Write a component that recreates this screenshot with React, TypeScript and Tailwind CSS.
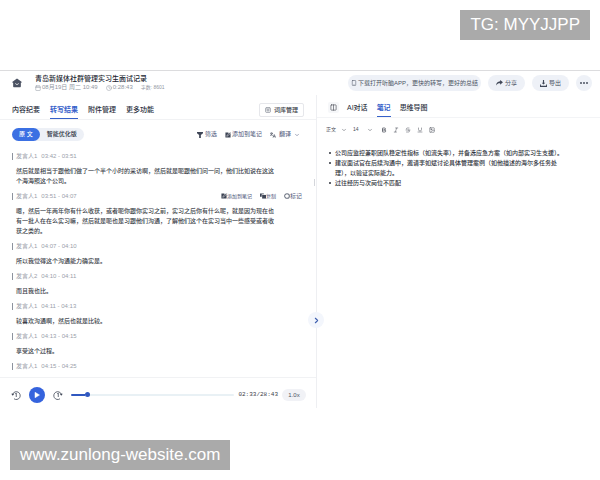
import { useState } from "react";
import type { ReactNode } from "react";
import {
  Bold,
  Calendar,
  ChevronDown,
  ChevronRight,
  Clock,
  Columns2,
  Image,
  Italic,
  Smartphone,
  Strikethrough,
  Underline,
} from "lucide-react";

const segments = [
  { speaker: "发言人1", time: "03:42 - 03:51", text: "然后就是相当于跟他们做了一个半个小时的采访啊，然后就是呃跟他们问一问，他们比如说在这这个海海照这个公司。" },
  {
    speaker: "发言人1",
    time: "03:51 - 04:07",
    text: "嗯，然后一年两年你有什么收获，或者呃你跟你实习之前，实习之后你有什么呢，就是因为现在也有一批人在在么实习嘛，然后就是呃也是习跟他们沟通，了解他们这个在实习当中一些感受或者收获之类的。",
    active: true,
  },
  { speaker: "发言人1", time: "04:07 - 04:10", text: "所以我觉得这个沟通能力确实是。" },
  { speaker: "发言人2", time: "04:10 - 04:11", text: "而且我也比。" },
  { speaker: "发言人1", time: "04:11 - 04:13", text: "较喜欢沟通啊，然后也就是比较。" },
  { speaker: "发言人1", time: "04:13 - 04:15", text: "享受这个过程。" },
  { speaker: "发言人1", time: "04:15 - 04:25", text: "" },
];

const notes = [
  "公司应监控兼职团队稳定性指标（如流失率），并备选应急方案（如内部实习生支援）。",
  "建议面试官在后续沟通中，邀请李如斌讨论具体管理案例（如他描述的海尔多任务处理），以验证实际能力。",
  "过往经历与次岗位不匹配",
];

function HomeIcon() {
  return (
    <svg viewBox="0 0 20 20" className="size-[10px] shrink-0" fill="#4b5262">
      <path d="M10 1.2 19 7.6c.8.6.4 1.7-.5 1.7h-.8v7.2c0 1.2-.8 2-2 2H4.300c-1.200 0-2-.8-2-2V9.300h-.8c-.9 0-1.300-1.100-.5-1.700z" />
      <path d="M7 11.500c1.500 2.200 4.500 2.200 6 0" stroke="#fff" strokeWidth="1.600" fill="none" strokeLinecap="round" />
    </svg>
  );
}

function ShareIcon() {
  return (
    <svg viewBox="0 0 16 14" className="h-[6px] w-[7px]" fill="#3f4656">
      <path d="M9.500 0 16 5.500 9.500 11V7.800C5.500 7.600 2.500 9 0 13 .5 7.500 3.500 3.800 9.500 3.200z" />
    </svg>
  );
}

function ExportIcon() {
  return (
    <svg viewBox="0 0 16 16" className="size-[7px]" fill="#3f4656">
      <path d="M6.700 0h2.600v6H12L8 10.500 4 6h2.700zM0 10.500h2v2.500h12v-2.500h2V16H0z" />
    </svg>
  );
}

function FilterIcon() {
  return (
    <svg viewBox="0 0 12 12" className="size-[6px]" fill="#3f4656">
      <path d="M0 0h12v2.500L7.700 6v6H4.300V6L0 2.500z" />
    </svg>
  );
}

function NoteIcon() {
  return (
    <svg viewBox="0 0 14 14" className="size-[6px]">
      <path d="M1 1h7v2h5v10H1z" fill="#3f4656" />
      <path d="M4 10 5 7l7-6.500L13.500 2 7 9z" fill="#3f4656" stroke="#fff" strokeWidth="1" />
    </svg>
  );
}

function TranslateIcon() {
  return (
    <svg viewBox="0 0 14 14" className="size-[6px]" fill="none" stroke="#3f4656" strokeWidth="1.500">
      <path d="M0 3h7M3.500 1v2M6 3C5 6 3 7.500 .5 8.500M1.500 4.500C3 7 5 8 6.500 8.500M7 13l3-7 3 7M8 11h4" />
    </svg>
  );
}

function CopyIcon() {
  return (
    <svg viewBox="0 0 14 14" className="size-[6px]" fill="#3f4656">
      <path d="M0 1h9v2H4v6H0z" />
      <path d="M5 4.500h9V13H5z" />
    </svg>
  );
}

function MarkIcon() {
  return (
    <svg viewBox="0 0 14 14" className="size-[6px]" fill="none" stroke="#6b7280">
      <circle cx="7" cy="7" r="5.500" strokeWidth="2.400" />
    </svg>
  );
}

function LexiconIcon() {
  return (
    <svg viewBox="0 0 14 14" className="size-[6px]" fill="none" stroke="#5b6270" strokeWidth="1.300">
      <rect x="1.500" y="1.500" width="11" height="11" rx="2" />
      <circle cx="7" cy="7" r="2.500" />
      <path d="M4 1.500v2M10 1.500v2" />
    </svg>
  );
}

function SkipIcon({ forward = false }: { forward?: boolean }) {
  return (
    <svg viewBox="0 0 20 20" className="size-[10px]" fill="none" stroke="#3f4656" strokeWidth="1.600">
      <path d={forward ? "M14 17.500A7.800 7.800 0 1 1 16.500 8" : "M6 17.500A7.800 7.800 0 1 0 3.500 8"} />
      <path d={forward ? "M13.500 7.500h6l-3 4z" : "M.5 7.500h6l-3 4z"} fill="#3f4656" stroke="none" />
      <path d="M8.500 7.500 10.500 6v8" />
    </svg>
  );
}

function Tab({ active = false, children }: { active?: boolean; children: ReactNode }) {
  return (
    <button
      role="tab"
      aria-selected={active}
      className={
        active
          ? "border-b border-[#3560c9] pb-[3px] text-[7px] leading-[10px] font-bold text-[#3560c9]"
          : "border-b border-transparent pb-[3px] text-[7px] leading-[10px] font-medium text-[#2b3040]"
      }
    >
      {children}
    </button>
  );
}

function TopBar() {
  return (
    <header className="flex h-[25px] items-center border-t border-[#dcdcde] pr-2 pl-3">
      <a href="#" aria-label="首页">
        <HomeIcon />
      </a>
      <div className="ml-[13px] flex flex-col">
        <h1 className="text-[7px] leading-[9px] font-medium text-[#22262f]">青岛新媒体社群管理实习生面试记录</h1>
        <div className="flex items-center text-[6px] leading-[9px] text-[#9298a3]">
          <Calendar size={6} className="mr-px" />
          <span>08月19日 周二 10:49</span>
          <Clock size={6} className="mr-px ml-2" />
          <span>0:28:43</span>
          <span className="ml-2 text-[5px]">字数: 8601</span>
        </div>
      </div>
      <div className="ml-auto flex items-center gap-[7px] text-[6px] text-[#4b5262]">
        <button className="flex h-4 items-center gap-px rounded-full bg-[#eef1f7] px-[3px]">
          <Smartphone size={6} />
          下载打开听脑APP，更快的转写，更好的总结
        </button>
        <button className="flex h-4 items-center gap-[2px] rounded-full bg-[#eef1f7] px-2">
          <ShareIcon />
          分享
        </button>
        <button className="flex h-4 items-center gap-[2px] rounded-full bg-[#eef1f7] px-2">
          <ExportIcon />
          导出
        </button>
        <button aria-label="更多" className="flex size-4 items-center justify-center gap-px rounded-full bg-[#eef1f7]">
          <i className="size-[2px] rounded-full bg-[#4b5262]" />
          <i className="size-[2px] rounded-full bg-[#4b5262]" />
          <i className="size-[2px] rounded-full bg-[#4b5262]" />
        </button>
      </div>
    </header>
  );
}

function Transcript() {
  return (
    <div className="flex flex-col gap-[5px] pt-[10px] pr-[14px] pb-[6px] pl-3 leading-[10px]">
      {segments.map((s) => (
        <article key={s.time} className="flex flex-col gap-[5px]">
          <div className="flex items-center text-[6px] text-[#9aa0aa]">
            <i className="mr-[3px] h-[7px] w-px bg-[#8d939e]" />
            <span className="mr-1">{s.speaker}</span>
            <span>{s.time}</span>
            {s.active && (
              <div className="ml-auto flex items-center gap-2 text-[5px] text-[#4b5578]">
                <button className="flex items-center">
                  <NoteIcon />
                  添加到笔记
                </button>
                <button className="flex items-center">
                  <CopyIcon />
                  复制
                </button>
                <button className="flex items-center text-[6px]">
                  <MarkIcon />
                  标记
                </button>
              </div>
            )}
          </div>
          {s.text && <p className="ml-1 max-w-[260px] text-[6px] font-medium text-[#3a3e48]">{s.text}</p>}
        </article>
      ))}
    </div>
  );
}

function Player() {
  const [position, setPosition] = useState(153);
  const length = 1723;
  const played = (position / length) * 100;

  return (
    <div className="flex h-[31px] items-center border-t border-[#f1f2f4] pt-[3px] pr-[10px] pl-[11px]">
      <button aria-label="后退">
        <SkipIcon />
      </button>
      <button aria-label="播放" className="mx-2 flex size-4 items-center justify-center rounded-full bg-[#3563dd]">
        <svg viewBox="0 0 12 12" className="size-[6px]" fill="#fff">
          <path d="M2 .5 11 6l-9 5.500z" stroke="#fff" strokeLinejoin="round" />
        </svg>
      </button>
      <button aria-label="前进">
        <SkipIcon forward />
      </button>
      <input
        type="range"
        aria-label="播放进度"
        min={0}
        max={length}
        value={position}
        onChange={(e) => setPosition(Number(e.target.value))}
        style={{ backgroundImage: `linear-gradient(to right, #3058c0 ${played}%, #e9f1f5 ${played}%)` }}
        className="mx-1 ml-2 h-[2px] min-w-0 flex-1 appearance-none rounded-full [&::-webkit-slider-thumb]:size-[5px] [&::-webkit-slider-thumb]:appearance-none [&::-webkit-slider-thumb]:rounded-full [&::-webkit-slider-thumb]:bg-[#3058c0]"
      />
      <span className="font-['Liberation_Mono',monospace] text-[6px] text-[#3a3e48]">02:33/28:43</span>
      <button className="ml-1 h-3 w-6 rounded-full bg-[#f1f2f6] text-[6px] leading-3 text-[#4b5262]">1.0x</button>
    </div>
  );
}

function TranscriptPanel() {
  return (
    <section className="relative border-r border-[#eeeff2]">
      <div className="flex h-[25px] items-end border-b border-[#f1f2f4] pr-3 pl-3">
        <div role="tablist" className="flex gap-[10px]">
          <Tab>内容纪要</Tab>
          <Tab active>转写结果</Tab>
          <Tab>附件管理</Tab>
          <Tab>更多功能</Tab>
        </div>
        <button className="mb-[2px] ml-auto flex h-[14px] items-center gap-[3px] rounded-[2px] border border-[#e6e7eb] px-[5px] text-[6px] font-medium text-[#3a3e48]">
          <LexiconIcon />
          词库管理
        </button>
      </div>

      <div className="flex items-center pt-2 pr-4 pl-3 text-[6px] text-[#4b5578]">
        <div className="flex h-[13px] items-center rounded-full bg-[#edf0f6]">
          <button className="h-[13px] rounded-full bg-[#3b70e3] px-[7px] font-medium text-white">原 文</button>
          <button className="px-[7px] font-medium text-[#2b3040]">智能优化版</button>
        </div>
        <div className="ml-auto flex items-center gap-2">
          <button className="flex items-center gap-[2px]">
            <FilterIcon />
            筛选
          </button>
          <button className="flex items-center gap-px">
            <NoteIcon />
            添加到笔记
          </button>
          <button className="flex items-center gap-[3px]">
            <TranslateIcon />
            翻译
            <ChevronDown size={6} />
          </button>
        </div>
      </div>

      <Transcript />
      <Player />

      <i className="absolute top-[84px] right-px h-[7px] w-px bg-[#d4d6db]" />
      <button
        aria-label="收起"
        className="absolute top-[217px] -right-2 z-10 flex size-4 items-center justify-center rounded-full bg-[#f3f6fc] text-[#3f5fae]"
      >
        <ChevronRight size={9} strokeWidth={3} />
      </button>
    </section>
  );
}

function NotesPanel() {
  return (
    <section>
      <div className="flex h-[23px] items-end border-b border-[#f3f4f6] pl-[11px]">
        <button aria-label="分栏" className="mb-[4px] mr-2 flex size-[11px] items-center justify-center rounded-[2px] bg-[#f6f7f9] text-[#3a3e48]">
          <Columns2 size={7} />
        </button>
        <div role="tablist" className="flex gap-[9px]">
          <Tab>AI对话</Tab>
          <Tab active>笔记</Tab>
          <Tab>思维导图</Tab>
        </div>
      </div>

      <div className="flex h-6 items-center pl-[9px] text-[5px] text-[#4b4f59]">
        <label className="mr-[6px] flex items-center gap-1">
          <select aria-label="段落样式" className="appearance-none">
            <option>正文</option>
          </select>
          <ChevronDown size={6} />
        </label>
        <label className="mr-2 flex items-center gap-2">
          <select aria-label="字号" className="appearance-none">
            <option>14</option>
          </select>
          <ChevronDown size={6} />
        </label>
        <div className="flex gap-[6px]">
          <button aria-label="加粗"><Bold size={6} strokeWidth={3} /></button>
          <button aria-label="斜体"><Italic size={6} /></button>
          <button aria-label="删除线"><Strikethrough size={6} /></button>
          <button aria-label="下划线"><Underline size={6} /></button>
          <button aria-label="图片"><Image size={6} /></button>
        </div>
      </div>

      <ul className="flex flex-col pt-[6px] pl-3 text-[6px] leading-[10px] font-medium text-[#2f333c]">
        {notes.map((note) => (
          <li key={note} className="flex gap-1">
            <i className="mt-1 size-[2px] shrink-0 rounded-full bg-[#2f333c]" />
            <span className="max-w-[232px]">{note}</span>
          </li>
        ))}
      </ul>
    </section>
  );
}

export default function App() {
  return (
    <div className="flex min-h-screen flex-col overflow-hidden bg-white font-['Liberation_Sans','Noto_Sans_CJK_SC',sans-serif]">
      <div className="flex justify-end p-[10px] pb-[30px]">
        <p className="bg-[#aaaaaa] px-[10px] text-[17px] leading-[30px] text-white">TG: MYYJJPP</p>
      </div>

      <main>
        <TopBar />
        <div className="grid grid-cols-[317fr_283fr]">
          <TranscriptPanel />
          <NotesPanel />
        </div>
      </main>

      <div className="mt-auto flex p-[10px]">
        <a href="#" className="bg-[#aaaaaa] px-[10px] text-[17px] leading-[30px] text-white">
          www.zunlong-website.com
        </a>
      </div>
    </div>
  );
}
